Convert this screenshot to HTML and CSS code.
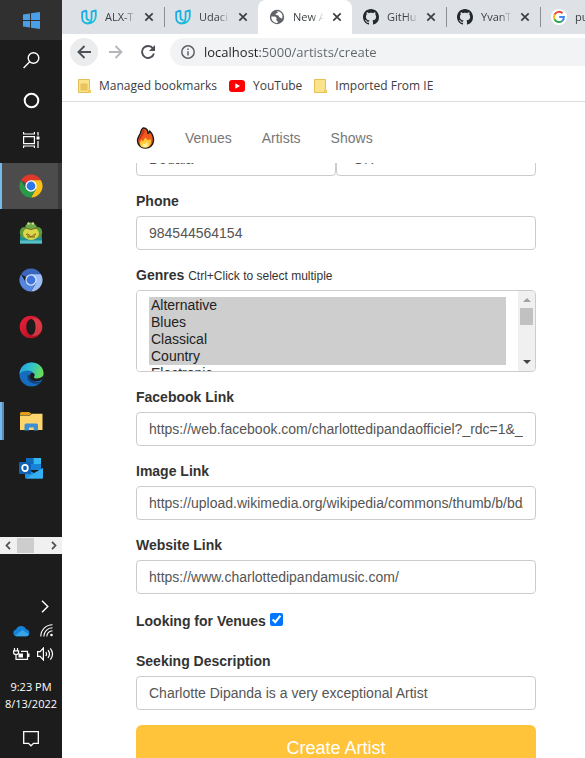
FILE: index.html
```html
<!DOCTYPE html>
<html lang="en">
<head>
<meta charset="utf-8">
<meta name="viewport" content="width=device-width, initial-scale=1">
<title>New Artist</title>
<link rel="stylesheet" href="styles.css">
</head>
<body>
<svg width="0" height="0" class="defs" aria-hidden="true">
  <defs>
    <linearGradient id="uda" x1="0" y1="0" x2="1" y2="1"><stop offset="0" stop-color="#1fa5e6"/><stop offset="1" stop-color="#14c3d8"/></linearGradient>
    <linearGradient id="edgeTop" x1="0" y1="0" x2="1" y2=".3"><stop offset="0" stop-color="#259fe0"/><stop offset=".55" stop-color="#31c5c9"/><stop offset="1" stop-color="#67dc5c"/></linearGradient>
    <linearGradient id="opera" x1="0" y1="0" x2="1" y2="1"><stop offset="0" stop-color="#f0203a"/><stop offset="1" stop-color="#a30f1c"/></linearGradient>
    <symbol id="i-udacity" viewBox="0 0 16 16"><path d="M5.500 1.400 1.200 3.200V9c0 3.500 2.600 5.600 5.600 5.500 4.800-.2 8-3 8-7.500V1.300L10.600 2.600V9c0 2.800-1.300 4.600-3.800 5.400M5.500 1.400V8.200c0 1.800 1 2.900 3 2.900" fill="none" stroke="url(#uda)" stroke-width="1.800" stroke-linejoin="round"/></symbol>
    <symbol id="i-x" viewBox="0 0 10 10"><path d="M1.300 1.300l7.400 7.400M8.700 1.300L1.300 8.700" stroke="#3c4043" stroke-width="1.700"/></symbol>
    <symbol id="i-github" viewBox="0 0 16 16"><path fill="#24292e" d="M8 0C3.580 0 0 3.580 0 8c0 3.540 2.290 6.530 5.470 7.590.4.070.55-.17.55-.38 0-.19-.010-.82-.010-1.490-2.010.37-2.530-.49-2.690-.94-.090-.23-.48-.94-.82-1.130-.28-.15-.68-.52-.010-.53.63-.010 1.080.58 1.230.82.72 1.210 1.870.87 2.330.66.070-.52.28-.87.51-1.070-1.780-.2-3.640-.89-3.640-3.950 0-.87.31-1.590.82-2.150-.080-.2-.36-1.020.080-2.120 0 0 .67-.21 2.200.82.64-.18 1.320-.27 2-.27s1.360.090 2 .27c1.530-1.040 2.200-.82 2.200-.82.44 1.100.16 1.920.080 2.120.51.56.82 1.270.82 2.150 0 3.070-1.870 3.750-3.650 3.950.29.25.54.73.54 1.480 0 1.070-.010 1.930-.010 2.200 0 .21.15.46.55.38A8.010 8.010 0 0 0 16 8c0-4.420-3.580-8-8-8z"/></symbol>
    <symbol id="i-globe" viewBox="0 0 16 16"><circle cx="8" cy="8" r="7.200" fill="#5f6368"/><path d="M2.300 7.500c2 .3 4-.3 5 1 .8 1.100-.3 1.600.2 2.700.4.900 1.500.7 1.400 2.600-3.800.6-6.900-2.400-6.600-6.300zM7.500 2.200c1 .5 1.700 1.100.9 1.900-.8.700-1.800.3-1.800 1.300 0 1.100 1.700.4 2.700 1.200.9.700.4 1.700 1.600 2 1.100.2 1.300 1.300 2.300.6C14.500 5 11.500 1.700 7.500 2.200z" fill="#fff"/></symbol>
    <symbol id="i-folder" viewBox="0 0 13 14"><path d="M.5.500h11v10l1 1v2H.5z" fill="#fbe38b" stroke="#e3bf55"/><path d="M10 10.500l1.500-1.500 1 2.500v2h-2.500z" fill="#f5cd5e"/></symbol>
    <symbol id="i-chromering" viewBox="0 0 24 24"><path class="c1" d="M2.040 6.250A11.500 11.500 0 0 1 21.960 6.250L12 12z"/><path class="c2" d="M21.960 6.250A11.500 11.500 0 0 1 12 23.500l5-8.600L12 6.250z"/><path class="c3" d="M2.040 6.250A11.500 11.500 0 0 0 12 23.500l5-8.600-10-.1z"/><circle class="c4" cx="12" cy="12" r="5.700"/><circle class="c5" cx="12" cy="12" r="4.400"/></symbol>
  </defs>
</svg>

<div class="screen">
  <aside class="taskbar" aria-label="Taskbar">
    <div class="system">
      <button class="sys start" aria-label="Start"><svg width="17" height="17" viewBox="0 0 17 17"><path fill="#4a9fe8" d="M0 2.500 7 1.500V8H0zM8 1.300 17 0v8H8zM0 9h7v6.500L0 14.500zM8 9h9v8l-9-1.300z"/></svg></button>
      <button class="sys" aria-label="Search"><svg width="17" height="17" viewBox="0 0 17 17" fill="none" stroke="#fff" stroke-width="1.400"><circle cx="10.500" cy="6" r="5.300"/><path d="M6.700 9.800.6 16"/></svg></button>
      <button class="sys" aria-label="Cortana"><svg width="17" height="17" viewBox="0 0 17 17" fill="none" stroke="#fff" stroke-width="2"><circle cx="8.500" cy="8.500" r="6.800"/></svg></button>
      <button class="sys" aria-label="Task view"><svg width="17" height="16" viewBox="0 0 17 16" fill="none" stroke="#fff" stroke-width="1.200"><path d="M.6 4.600h10.800v7H.6zM.6 0v2h10.800V0M.6 16v-2h10.800v2M15 0v3.500M15 9v7"/><path d="M13.500 4.500h3v3h-3z" fill="#fff" stroke="none"/></svg></button>
    </div>
    <nav class="apps" aria-label="Apps">
      <button class="app app-active" aria-label="Chrome"><svg class="chrome" width="24" height="24"><use href="#i-chromering"/></svg></button>
      <button class="app" aria-label="Frog"><svg width="24" height="24" viewBox="0 0 24 24"><path d="M1 15h22v7.500H1z" fill="#1d8f96"/><path d="M1 19.500h22v3H1z" fill="#58c0c4"/><ellipse cx="5" cy="11.500" rx="4.200" ry="5.500" fill="#5f9a3c"/><ellipse cx="19" cy="11.500" rx="4.200" ry="5.500" fill="#5f9a3c"/><ellipse cx="12" cy="12.500" rx="8" ry="6.500" fill="#d9d84a"/><path d="M6 6Q8 1 12 1.500T18 6q-2.500 2.500-6 2.500T6 6z" fill="#6faa4b"/><circle cx="9.500" cy="2.500" r="1.200" fill="#cfdc8a"/><circle cx="14" cy="2.500" r="1.200" fill="#cfdc8a"/><path d="M6.500 7q5.500 3 11 0M7 13q5 5 10 0M8 16h8" fill="none" stroke="#7b6a20"/><path d="M8 12.500l3 2M16 12.500l-2 2" stroke="#bd5c2c"/></svg></button>
      <button class="app" aria-label="Chromium"><svg class="chromium" width="24" height="24"><use href="#i-chromering"/></svg></button>
      <button class="app" aria-label="Opera"><svg width="24" height="24" viewBox="0 0 24 24"><path fill-rule="evenodd" fill="url(#opera)" d="M12 .7a11.300 11.300 0 1 0 0 22.600A11.300 11.300 0 0 0 12 .7zM12.300 4c3 0 4.300 3.800 4.300 8s-1.300 8-4.300 8-5-3.800-5-8 2-8 5-8z"/><path fill="#ef5b62" d="M12.500 4c3.500-2 10.800.5 10.800 8s-7.300 10.500-10.800 8c5.500-.5 5.500-15.500 0-16z" opacity=".5"/></svg></button>
      <button class="app" aria-label="Edge"><svg width="25" height="25" viewBox="0 0 25 25"><circle cx="12.500" cy="12.500" r="12" fill="#176dbd"/><path d="M.5 12C1 4.500 6.500.5 12.500.5c7 0 12 5 12 10.500 0 4-3 6-6.200 6-2.800 0-4-1-3.300-2.200.7-1.100.7-2 .2-3C13 7.500 4.500 7 .5 12z" fill="url(#edgeTop)"/><path d="M8.500 12.500c-1.500 6 3.800 10.500 12 8.800l1.700-1.800c-5 1.800-9.500-.3-10.200-4.500z" fill="#11427f"/><path d="M15.200 11.800c-1.700-1.900-5.200-.3-4.600 3.200.7 3.500 5.400 5.600 10.500 3.500l2.400-.9 1-4c-2.500 3.500-10.500 4-9.500 1.200.7-1.100.7-2 .2-3z" fill="#1c1c1c"/></svg></button>
      <button class="app app-open" aria-label="File Explorer"><svg width="23" height="19" viewBox="0 0 23 19"><path d="M0 3.500h10l2-1.700h10.500V18H0z" fill="#fdd56b"/><path d="M0 3h10l1.500-1.200L9 0H1L0 1z" fill="#dc9f16"/><path d="M4.500 18.500v-5.500q0-1.500 1.500-1.500h10.500q1.500 0 1.500 1.500v5.500h-4.300v-3H9v3z" fill="#3c8fd4"/></svg></button>
      <button class="app" aria-label="Outlook"><svg width="24" height="22" viewBox="0 0 24 22"><path d="M7 1h15v12H7z" fill="#1883d6"/><path d="M14.500 1H22v6h-7.500z" fill="#35b8f1"/><path d="M7 1h7.500v6H7z" fill="#0f6cbc"/><path d="M6 11l9 5 9-5v9.500q0 1-1 1H7q-1 0-1-1z" fill="#1e94e2"/><path d="M24 11 7 21.500h16q1 0 1-1z" fill="#36aef0"/><rect y="5" width="12" height="12" rx="1" fill="#0f62b5"/><ellipse cx="6" cy="11" rx="2.800" ry="3.200" fill="none" stroke="#fff" stroke-width="1.800"/></svg></button>
    </nav>
    <div class="hscroll" aria-hidden="true">
      <svg width="6" height="9" viewBox="0 0 6 9"><path d="M5 .8 1.500 4.500 5 8.200" fill="none" stroke="#505050" stroke-width="1.800"/></svg>
      <span class="hthumb"></span>
      <svg width="6" height="9" viewBox="0 0 6 9"><path d="M1 .8 4.500 4.500 1 8.200" fill="none" stroke="#505050" stroke-width="1.800"/></svg>
    </div>
    <div class="tray">
      <svg class="more" width="8" height="13" viewBox="0 0 8 13"><path d="M1 .7 6.800 6.500 1 12.300" fill="none" stroke="#fff" stroke-width="1.400"/></svg>
      <div class="status">
        <svg width="17" height="12" viewBox="0 0 17 12"><path d="M3.500 11.300a3.500 3.500 0 0 1-.4-6.900A5.300 5.300 0 0 1 13 4.200a3.600 3.600 0 0 1 .5 7.100z" fill="#1583d8"/><path d="M2 10.800 9.500 5l6.500 4.500q-1 1.800-2.500 1.800h-10z" fill="#37a5ea"/></svg>
        <svg width="14" height="13" viewBox="0 0 14 13" fill="none" stroke="#fff" stroke-width="1.100"><path d="M.8 12.500A11.700 11.700 0 0 1 12.500.8M3.800 12.500a8.700 8.700 0 0 1 8.700-8.700M6.800 12.500a5.700 5.700 0 0 1 5.700-5.700" /><circle cx="11.500" cy="11" r="1.300" fill="#fff" stroke="none"/></svg>
        <svg width="17" height="12" viewBox="0 0 17 12" fill="none" stroke="#fff" stroke-width="1.200"><path d="M1.500 0v2.500M4.500 0v2.500M.6 2.800h5v1.700q0 2-2.500 2t-2.500-2zM3 6.500v4.900h11.500v-8H8"/><path d="M15 5.500h1.500v3.500H15z" fill="#fff" stroke="none"/><path d="M5.500 5.500h4.500v4H5.500z" fill="#fff" stroke="none"/></svg>
        <svg width="17" height="14" viewBox="0 0 17 14" fill="none" stroke="#fff" stroke-width="1.200"><path d="M.6 4.600h2.500L6.400 1v12L3.100 9.400H.6zM8.800 5q1.500 2 0 4M11 3.200q3 3.800 0 7.600M13.300 1.400q4.500 5.600 0 11.200"/></svg>
      </div>
      <div class="clock"><time>9:23 PM</time><time>8/13/2022</time></div>
      <svg class="note" width="16" height="16" viewBox="0 0 16 16"><path d="M.7.700h14.600v11.600H10.500L8 14.800l-2.500-2.500H.7z" fill="none" stroke="#fff" stroke-width="1.300"/></svg>
    </div>
  </aside>

  <div class="browser">
    <div class="tabs">
      <div class="tab"><svg width="16" height="16"><use href="#i-udacity"/></svg><span class="tab-title">ALX-T</span><button class="close" aria-label="Close tab"><svg width="10" height="10"><use href="#i-x"/></svg></button></div>
      <div class="tab ruled"><svg width="16" height="16"><use href="#i-udacity"/></svg><span class="tab-title">Udaci</span><button class="close" aria-label="Close tab"><svg width="10" height="10"><use href="#i-x"/></svg></button></div>
      <div class="tab current"><svg width="16" height="16"><use href="#i-globe"/></svg><span class="tab-title">New A</span><button class="close" aria-label="Close tab"><svg width="10" height="10"><use href="#i-x"/></svg></button></div>
      <div class="tab"><svg width="16" height="16"><use href="#i-github"/></svg><span class="tab-title">GitHu</span><button class="close" aria-label="Close tab"><svg width="10" height="10"><use href="#i-x"/></svg></button></div>
      <div class="tab ruled"><svg width="16" height="16"><use href="#i-github"/></svg><span class="tab-title">YvanT</span><button class="close" aria-label="Close tab"><svg width="10" height="10"><use href="#i-x"/></svg></button></div>
      <div class="tab ruled"><svg width="16" height="16" viewBox="0 0 16 16"><circle cx="8" cy="8" r="8" fill="#fff"/><g fill="none" stroke-width="2"><path d="M11.500 4.200A5 5 0 0 0 3.500 5.700" stroke="#ea4335"/><path d="M3.500 5.700a5 5 0 0 0 0 4.600" stroke="#fbbc05"/><path d="M3.500 10.300a5 5 0 0 0 7.700 1.600" stroke="#34a853"/><path d="M11.200 11.900Q13 10.300 12.900 8H8.200" stroke="#4285f4"/></g></svg><span class="tab-title">pu</span></div>
    </div>

    <div class="toolbar">
      <button class="tool back" aria-label="Back"><svg width="14" height="14" viewBox="0 0 14 14"><path d="M14 7H1.500M7.500 1 1.500 7l6 6" fill="none" stroke="#4d5156" stroke-width="1.900"/></svg></button>
      <button class="tool" aria-label="Forward"><svg width="14" height="14" viewBox="0 0 14 14"><path d="M0 7h12.500M6.500 1l6 6-6 6" fill="none" stroke="#b4b6b9" stroke-width="1.800"/></svg></button>
      <button class="tool" aria-label="Reload"><svg width="14" height="14" viewBox="0 0 14 14"><path d="M12 3.500A6 6 0 1 0 12.900 8.500" fill="none" stroke="#4d5156" stroke-width="1.900"/><path d="M14 0v6H8z" fill="#4d5156"/></svg></button>
      <label class="address"><svg width="14" height="14" viewBox="0 0 14 14"><circle cx="7" cy="7" r="6.200" fill="none" stroke="#5f6368" stroke-width="1.500"/><path d="M7 6.200v4.300M7 3.500v1.500" stroke="#5f6368" stroke-width="1.500"/></svg><input type="text" class="url" aria-label="Address" value="localhost:5000/artists/create"></label>
    </div>

    <div class="bookmarks">
      <a href="#"><svg width="13" height="14" viewBox="0 0 13 14"><use href="#i-folder"/><path d="M3 5h6v6H3zM3 7h6M3 9h6M5 5v6M7 5v6" fill="none" stroke="#e0b444" stroke-width=".8"/></svg>Managed bookmarks</a>
      <a href="#"><svg width="16" height="12" viewBox="0 0 16 12"><rect width="16" height="12" rx="3" fill="#f00"/><path d="M6.300 3.300v5.400L11 6z" fill="#fff"/></svg>YouTube</a>
      <a href="#"><svg width="13" height="14"><use href="#i-folder"/></svg>Imported From IE</a>
    </div>

    <div class="page">
      <nav class="site-nav">
        <a href="#" class="brand" aria-label="Home"><svg width="19" height="22" viewBox="0 0 18 22"><path d="M6.500 1C10.500.8 11.500 4 11.500 6.500c1-.5 1.500-1.500 1.600-2.500 3 3 4 6 3.900 9.500-.2 4.500-3.500 7.500-8 7.500s-8-3-8-7.500C1 10.500 3 8.500 3.800 6.500 4.400 4.800 4.300 2.500 6.500 1z" fill="#f2591c" stroke="#191919" stroke-width="1.400" stroke-linejoin="round"/><path d="M6.800 2c-2 1.500-1 4-2.500 6.500-1.300 2-2.300 3-2.400 5 2-.5 2.800-3 5-6S8.500 3 6.800 2z" fill="#c9371a"/><path d="M5 20c-2.500-2.500-1.500-5.500.2-7.500.4 1.200 1 1.700 1.600 1.800.3-1.500 1.200-2.800 2.600-3.800-.1 2 2.600 3.300 4.600 1.500 1 3.500.2 6.500-2 8-2.200.8-5 .8-7 0z" fill="#ffca3a"/><path d="M6.500 20c-1-1.500-.5-2.500.5-3.500.7.700 1.300.8 2 0l1-1.500c1.500 1.500 2 3.500.8 5-1.500.5-3 .5-4.300 0z" fill="#fff1a0"/></svg></a>
        <a href="#">Venues</a>
        <a href="#">Artists</a>
        <a href="#">Shows</a>
      </nav>
      <form class="artist-form">
        <div class="group row">
          <input class="control" type="text" aria-label="City" value="Douala">
          <select class="control" aria-label="State"><option>OH</option></select>
        </div>
        <div class="group"><label for="phone">Phone</label><input class="control" id="phone" type="text" value="984544564154"></div>
        <div class="group">
          <label for="genres">Genres <small>Ctrl+Click to select multiple</small></label>
          <div class="listbox">
            <select id="genres" multiple size="4">
              <option selected>Alternative</option><option selected>Blues</option><option selected>Classical</option><option selected>Country</option><option>Electronic</option>
            </select>
            <div class="vscroll" aria-hidden="true"><span class="up"></span><span class="vthumb"></span><span class="down"></span></div>
          </div>
        </div>
        <div class="group"><label for="fb">Facebook Link</label><input class="control" id="fb" type="text" value="https://web.facebook.com/charlottedipandaofficiel?_rdc=1&amp;_rdr"></div>
        <div class="group"><label for="img">Image Link</label><input class="control" id="img" type="text" value="https://upload.wikimedia.org/wikipedia/commons/thumb/b/bd/Charlotte_Dipanda.jpg"></div>
        <div class="group"><label for="web">Website Link</label><input class="control" id="web" type="text" value="https://www.charlottedipandamusic.com/"></div>
        <div class="group check"><label for="seek">Looking for Venues</label><input id="seek" type="checkbox" checked></div>
        <div class="group"><label for="desc">Seeking Description</label><input class="control" id="desc" type="text" value="Charlotte Dipanda is a very exceptional Artist"></div>
        <button class="submit" type="button">Create Artist</button>
      </form>
    </div>
  </div>
</div>
</body>
</html>
```

FILE: styles.css
```css
* { box-sizing: border-box; }
body { margin: 0; font-family: "Liberation Sans", Arial, sans-serif; font-size: 14px; line-height: 20px; color: #333; background: #fff; }
button { border: 0; padding: 0; background: none; font: inherit; }
a { text-decoration: none; color: inherit; }
svg { display: block; flex: none; }
.defs { position: absolute; }
.screen { display: grid; grid-template-columns: 62px minmax(0, 1fr); height: 100vh; overflow: hidden; }

/* Taskbar */
.taskbar { background: #1c1c1c; color: #fff; display: flex; flex-direction: column; overflow: hidden; }
.sys, .app { display: flex; align-items: center; justify-content: center; width: 100%; }
.sys { height: 40px; }
.start { background: #303030; }
.apps { padding-top: 3px; display: grid; gap: 1px; }
.app { height: 46px; }
.app-active { background: linear-gradient(90deg, #76b9ed 2px, #4c4c4c 2px, #4c4c4c 58px, #3a3a3a 58px); }
.app-open { background: linear-gradient(90deg, #76b9ed 2px, #5a8db5 2px, #5a8db5 4px, transparent 4px) 0 50% / 100% 38px no-repeat; }
.chrome { --c1: #e0392c; --c2: #fbc116; --c3: #2b9a48; --c4: #fff; --c5: #2f76e6; }
.chromium { --c1: #3a66bb; --c2: #9dbdf5; --c3: #5585dc; --c4: #d3e2fc; --c5: #3f74dc; }
.c1 { fill: var(--c1); }
.c2 { fill: var(--c2); }
.c3 { fill: var(--c3); }
.c4 { fill: var(--c4); }
.c5 { fill: var(--c5); }
.hscroll { flex: none; margin-top: 46px; height: 17px; padding: 0 5px; background: #f0f0f0; display: grid; grid-template-columns: 6px 17px 1fr; column-gap: 6px; align-items: center; justify-items: end; }
.hthumb { width: 17px; height: 15px; background: #cdcdcd; }
.tray { flex: 1; padding-top: 46px; display: flex; flex-direction: column; align-items: center; font-family: "Open Sans", "Noto Sans", sans-serif; font-size: 11px; line-height: 17px; }
.more { align-self: flex-end; margin-right: 13px; }
.status { margin-top: 6px; padding-left: 4px; display: grid; grid-template-columns: 17px 17px; grid-auto-rows: 23px; column-gap: 7px; align-items: center; justify-items: end; }
.clock { margin-top: 13px; display: grid; text-align: center; }
.note { margin-top: 19px; }

/* Browser frame */
.browser { display: flex; flex-direction: column; min-width: 0; overflow: hidden; }
.tabs, .toolbar, .bookmarks { font-family: "Open Sans", "Noto Sans", sans-serif; font-size: 12px; color: #3c4043; flex: none; }
.tabs { height: 34px; padding-left: 8px; display: flex; overflow: hidden; background: #dee1e6; }
.tab { flex: none; width: 94px; padding: 0 10px 0 11px; display: flex; align-items: center; gap: 8px; }
.tab-title { width: 31px; font-size: 11px; overflow: hidden; white-space: nowrap; -webkit-mask-image: linear-gradient(90deg, #000 60%, transparent); mask-image: linear-gradient(90deg, #000 60%, transparent); }
.ruled { background: linear-gradient(#8b8e93, #8b8e93) 0 50% / 1px 20px no-repeat; }
.current { background: #fff; border-radius: 8px 8px 0 0; }
.toolbar { height: 36px; display: flex; align-items: center; padding-left: 8px; gap: 4px; }
.tool { width: 28px; height: 28px; border-radius: 50%; display: grid; place-items: center; }
.back { background: #ebecee; }
.address { flex: 1; margin-left: 4px; height: 28px; padding-left: 11px; border-radius: 14px 0 0 14px; background: #f1f3f4; display: flex; align-items: center; gap: 9px; }
.url { flex: 1; min-width: 0; border: 0; padding: 0; outline: 0; font: 13px/20px "Open Sans", "Noto Sans", sans-serif; color: transparent; background: linear-gradient(90deg, #202124 56px, #5f6368 56px); -webkit-background-clip: text; background-clip: text; }
.bookmarks { height: 32px; padding: 0 16px; border-bottom: 1px solid #dadce0; display: flex; align-items: center; gap: 12px; white-space: nowrap; }
.bookmarks a { display: flex; align-items: center; gap: 8px; }

/* Web page */
.page { flex: 1; min-height: 0; overflow: hidden; }
.site-nav { position: relative; z-index: 1; height: 61px; padding: 10px 74px 0; background: #fff; display: flex; align-items: center; gap: 30px; color: #777; }
.artist-form { margin: -21px 49px 0 74px; }
.group { margin-bottom: 15px; }
.group label { display: block; margin-bottom: 5px; font-weight: 700; }
.group small { font-size: 12px; line-height: 1; font-weight: 400; }
.row { display: grid; grid-template-columns: 1fr 1fr; }
.control { display: block; width: 100%; height: 34px; padding: 6px 12px; border: 1px solid #ccc; border-radius: 4px; background: #fff; font: 14px/20px "Liberation Sans", Arial, sans-serif; color: #555; }
.listbox { display: flex; height: 82px; border: 1px solid #ccc; border-radius: 4px; overflow: hidden; }
.listbox select { flex: 1; min-width: 0; height: 100%; padding: 6px 12px 0; border: 0; border-radius: 0; outline: 0; overflow: hidden; background: #fff; font: 14px "Liberation Sans", Arial, sans-serif; color: #333; }
.listbox option { padding: 0 2px 1px; }
.listbox option:checked { color: #222; background: #cecece linear-gradient(#cecece, #cecece); }
.vscroll { width: 17px; background: #f0f0f0; display: flex; flex-direction: column; align-items: center; padding: 7px 0; }
.up, .down { border: 4px solid transparent; }
.up { border-top: 0; border-bottom-color: #a0a0a0; }
.down { margin-top: auto; border-bottom: 0; border-top-color: #444; }
.vthumb { margin-top: 6px; width: 13px; height: 17px; background: #c1c1c1; }
.check { display: flex; gap: 4px; padding-top: 2px; }
.check input { width: 13px; height: 13px; margin: 2px 0 0; accent-color: #0075ff; }
.submit { display: block; width: 100%; height: 46px; border-radius: 6px; background: #ffc439; color: #fff; font-size: 18px; line-height: 24px; }
```
